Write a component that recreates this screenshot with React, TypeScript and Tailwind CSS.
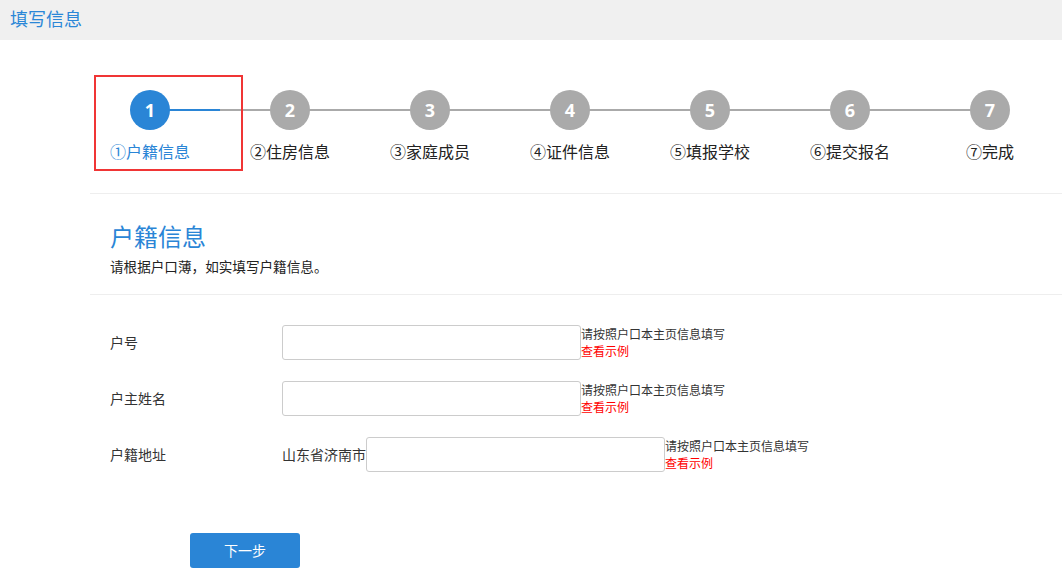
const steps = ['户籍信息', '住房信息', '家庭成员', '证件信息', '填报学校', '提交报名', '完成']
const circled = ['①', '②', '③', '④', '⑤', '⑥', '⑦']

function Step({ index, label }: { index: number; label: string }) {
  const active = index === 0
  const first = index === 0
  const last = index === steps.length - 1
  return (
    <div className="relative flex w-[140px] flex-col items-center">
      {!first && <div className="absolute left-0 top-[19px] h-[2px] w-[70px] bg-[#aaaaaa]" />}
      {!last && (
        <div
          className={
            active
              ? 'absolute right-0 top-[19px] h-[2px] w-[70px] bg-[#2a85d6]'
              : 'absolute right-0 top-[19px] h-[2px] w-[70px] bg-[#aaaaaa]'
          }
        />
      )}
      <div
        className={
          active
            ? 'relative z-10 flex size-[40px] items-center justify-center rounded-full bg-[#2a85d6] font-["Noto_Sans",sans-serif] text-[18px] font-bold text-white'
            : 'relative z-10 flex size-[40px] items-center justify-center rounded-full bg-[#aaaaaa] font-["Noto_Sans",sans-serif] text-[18px] font-bold text-white'
        }
      >
        {index + 1}
      </div>
      <div className={active ? 'mt-[9px] text-[16px] leading-[24px] text-[#2a85d6]' : 'mt-[9px] text-[16px] leading-[24px] text-[#222]'}>
        {circled[index]}
        {label}
      </div>
    </div>
  )
}

function Hint() {
  return (
    <div className="text-[12px] leading-[17px]">
      <div className="text-[#333]">请按照户口本主页信息填写</div>
      <div className="text-[#ff0000]">查看示例</div>
    </div>
  )
}

function Field({ label, prefix }: { label: string; prefix?: string }) {
  return (
    <div className="flex items-start">
      <div className="w-[172px] text-[14px] leading-[35px] text-[#333]">{label}</div>
      {prefix && <div className="text-[14px] leading-[35px] text-[#333]">{prefix}</div>}
      <input className="h-[35px] w-[299px] rounded-[3px] border border-[#cccccc] bg-white outline-none" />
      <Hint />
    </div>
  )
}

export default function App() {
  return (
    <div className="min-h-screen bg-white font-['Noto_Sans_CJK_SC','Liberation_Sans',sans-serif]">
      <div className="flex h-[40px] items-center bg-[#f0f0f0] px-[10px] pb-[3px] text-[18px] text-[#2b87d7]">填写信息</div>

      <div className="relative ml-[80px] flex pt-[50px]">
        {steps.map((s, i) => (
          <Step key={s} index={i} label={s} />
        ))}
        <div className="pointer-events-none absolute left-[14px] top-[35px] h-[96px] w-[149px] border-2 border-[#f03535]" />
      </div>

      <div className="ml-[90px] mt-[30px] border-t border-[#eeeeee] px-[20px] pt-[26px] pb-[18px]">
        <h1 className="text-[24px] leading-[32px] text-[#2a85d6]">户籍信息</h1>
        <p className="mt-[4px] text-[13.6px] leading-[20px] text-[#222]">请根据户口薄，如实填写户籍信息。</p>
      </div>

      <div className="ml-[90px] border-t border-[#eeeeee] px-[20px] pt-[30px]">
        <div className="flex flex-col gap-[21px]">
          <Field label="户号" />
          <Field label="户主姓名" />
          <Field label="户籍地址" prefix="山东省济南市" />
        </div>
        <button className="ml-[80px] mt-[61px] h-[35px] w-[110px] rounded-[3px] bg-[#2a85d6] text-[14px] text-white">下一步</button>
      </div>
    </div>
  )
}
